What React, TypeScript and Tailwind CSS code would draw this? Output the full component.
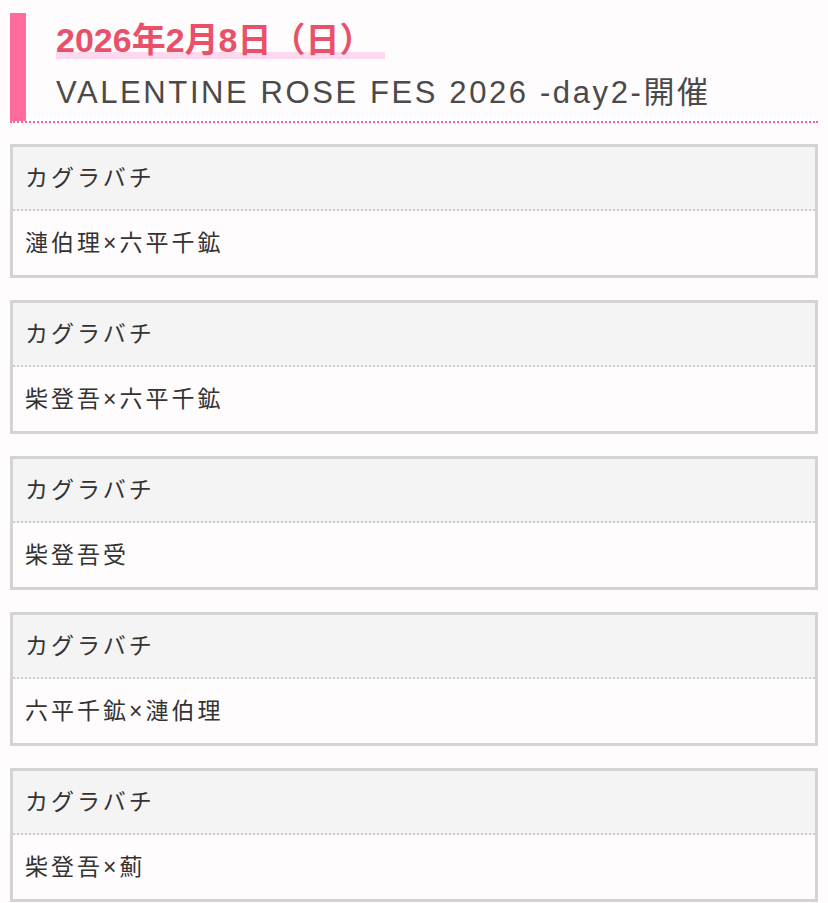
const entries = [
	{ circle: "カグラバチ", pair: "漣伯理×六平千鉱" },
	{ circle: "カグラバチ", pair: "柴登吾×六平千鉱" },
	{ circle: "カグラバチ", pair: "柴登吾受" },
	{ circle: "カグラバチ", pair: "六平千鉱×漣伯理" },
	{ circle: "カグラバチ", pair: "柴登吾×薊" }
];

const font = {
	fontFamily: '"Liberation Sans", "Noto Sans CJK JP", sans-serif'
};

export default function App() {
	return (
		<div
			className="min-h-[903px] w-full bg-[#fffcfd] px-[10px] pt-[13px]"
			style={font}
		>
			{/* Event heading */}
			<div className="flex border-b-2 border-dotted border-[#ff5f96]">
				<div className="w-[16px] shrink-0 bg-[#ff6b9a]" />
				<div className="flex flex-col pl-[30px] pt-[5px] pb-[6px]">
					<div className="relative w-fit">
						<span className="absolute left-0 right-[-12px] top-[34px] h-[7px] bg-[#fcd9ef]" />
						<h2 className="relative text-[34px] font-bold leading-[44px] text-[#e9506a]">
							2026年2月8日（日）
						</h2>
					</div>
					<p className="mt-[9px] text-[31px] leading-[44px] tracking-[2.6px] text-[#4a4a4a]">
						VALENTINE ROSE FES 2026 -day2-開催
					</p>
				</div>
			</div>

			{/* Circle list */}
			<div className="mt-[21px] flex flex-col gap-[22px]">
				{entries.map((e, i) => (
					<div key={i} className="border-[3px] border-[#d3d3d3]">
						<div className="flex h-[64px] items-center border-b-2 border-dotted border-[#cdcdcd] bg-[#f4f4f4] px-[12px] text-[23px] tracking-[3px] text-[#333]">
							{e.circle}
						</div>
						<div className="flex h-[64px] items-center bg-[#fffcfd] px-[12px] text-[23px] tracking-[3px] text-[#333]">
							{e.pair}
						</div>
					</div>
				))}
			</div>
		</div>
	);
}
